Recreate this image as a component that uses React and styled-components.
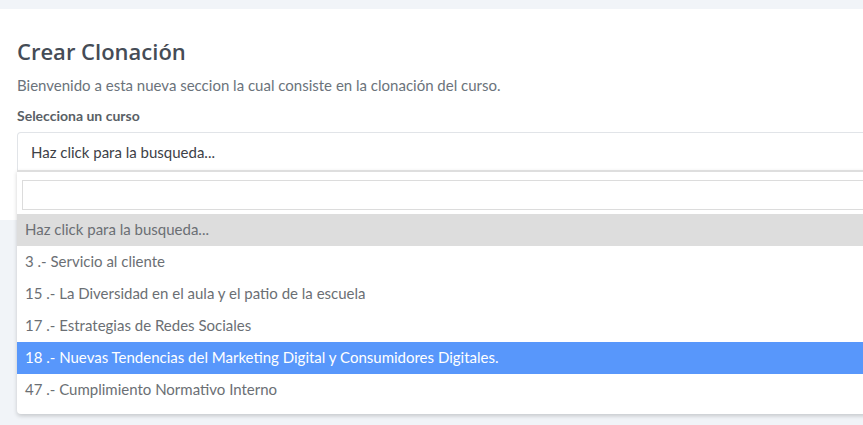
import React from "react";
import styled, { createGlobalStyle } from "styled-components";

const GlobalStyle = createGlobalStyle`
    html, body {
        margin: 0;
        padding: 0;
        background: #f1f4f8;
        overflow: hidden;
    }
    body {
        font-family: "Lato", "Open Sans", sans-serif;
    }
`;

const Page = styled.div`
    padding-top: 9px;
    width: 1000px;
    height: 425px;
`;

const Card = styled.div`
    background: #fff;
    height: 211px;
    padding: 29px 17px 0;
    box-sizing: border-box;
`;

const Title = styled.h3`
    margin: 0 0 11px;
    font-family: "Open Sans", sans-serif;
    font-weight: 600;
    font-size: 22px;
    line-height: 26px;
    color: #454c56;
`;

const Lead = styled.p`
    margin: 0 0 13px;
    font-size: 15px;
    line-height: 20px;
    color: #6b737b;
`;

const Label = styled.label`
    display: block;
    margin-bottom: 8px;
    font-size: 14px;
    font-weight: 700;
    line-height: 16px;
    color: #595f66;
`;

const SelectWrap = styled.div`
    position: relative;
`;

const SelectBox = styled.div`
    height: 38px;
    box-sizing: border-box;
    border: 1px solid #e1e4e8;
    border-bottom: none;
    border-radius: 4px 4px 0 0;
    padding: 0 13px;
    display: flex;
    align-items: center;
    font-size: 15px;
    color: #3d4147;
`;

const Dropdown = styled.div`
    position: absolute;
    top: 100%;
    left: 0;
    right: 0;
    background: #fff;
    border-top: 2px solid #dedede;
    box-shadow: 0 2px 4px rgba(0, 0, 0, 0.18);
    border-radius: 0 0 4px 4px;
    padding-bottom: 8px;
    z-index: 2;
`;

const SearchRow = styled.div`
    padding: 8px 5px 4px;
`;

const SearchInput = styled.input`
    display: block;
    width: 100%;
    height: 30px;
    box-sizing: border-box;
    border: 1px solid #dcdcdc;
    outline: none;
`;

const Option = styled.div`
    height: 32px;
    display: flex;
    align-items: center;
    padding: 0 8px 2px;
    box-sizing: border-box;
    font-size: 15px;
    color: ${p => (p.$active ? "#fff" : "#6b6f74")};
    background: ${p => (p.$active ? "#5897fb" : p.$muted ? "#dddddd" : "transparent")};
`;

const cursos = [
    "3 .- Servicio al cliente",
    "15 .- La Diversidad en el aula y el patio de la escuela",
    "17 .- Estrategias de Redes Sociales",
    "18 .- Nuevas Tendencias del Marketing Digital y Consumidores Digitales.",
    "47 .- Cumplimiento Normativo Interno"
];

function App() {
    return (
        <Page>
            <GlobalStyle/>
            <Card>
                <Title>Crear Clonación</Title>
                <Lead>Bienvenido a esta nueva seccion la cual consiste en la clonación del curso.</Lead>
                <Label>Selecciona un curso</Label>
                <SelectWrap>
                    <SelectBox>Haz click para la busqueda...</SelectBox>
                    <Dropdown>
                        <SearchRow>
                            <SearchInput/>
                        </SearchRow>
                        <Option $muted>Haz click para la busqueda...</Option>
                        {cursos.map((c) => (
                            <Option key={c} $active={c.startsWith("18")}>{c}</Option>
                        ))}
                    </Dropdown>
                </SelectWrap>
            </Card>
        </Page>
    );
}

export default App;
